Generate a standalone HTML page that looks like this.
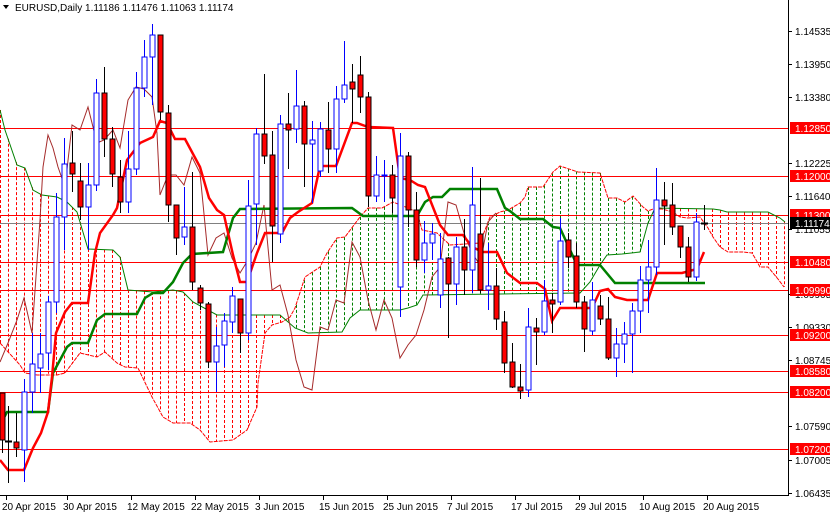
<!DOCTYPE html>
<html><head><meta charset="utf-8"><style>
html,body{margin:0;padding:0;background:#fff;width:830px;height:514px;overflow:hidden}
svg{display:block}
text{font-family:"Liberation Sans",Arial,sans-serif;font-size:10px}
</style></head><body>
<svg id="s" width="830" height="514" xmlns="http://www.w3.org/2000/svg"></svg>
<script>
const S=document.getElementById('s');let h='';
function L(p){return p.map(q=>q.join(',')).join(' ')}
function interp(a,x){if(x<=a[0][0])return a[0][1];for(let i=1;i<a.length;i++){if(x<=a[i][0]){const t=(x-a[i-1][0])/(a[i][0]-a[i-1][0]);return a[i-1][1]+t*(a[i][1]-a[i-1][1]);}}return a[a.length-1][1];}
const A=[[0,343],[20,365],[25,373],[37,375],[57,375],[65,373],[80,353],[97,357],[105,352],[117,363],[125,367],[138,368],[152,397],[163,417],[173,423],[190,423],[200,430],[210,442],[233,440],[247,430],[257,407],[258,383],[265,333],[272,325],[282,322],[290,317],[295,308],[305,277],[320,267],[327,253],[337,238],[345,237],[360,217],[368,208],[382,208],[393,202],[408,208],[417,212],[422,230],[437,233],[450,245],[480,243],[490,217],[500,212],[508,210],[520,203],[525,197],[528,187],[543,187],[553,172],[560,166],[578,172],[600,173],[608,198],[617,198],[625,202],[633,196],[643,207],[648,211],[653,209],[662,209],[673,212],[680,217],[688,218],[700,217],[708,228],[713,237],[720,247],[728,252],[743,252],[752,253],[755,258],[760,267],[768,267],[778,279],[784,287]];
const B=[[0,110],[5,130],[17,165],[25,168],[33,190],[42,195],[57,197],[67,202],[77,212],[88,249],[113,250],[120,257],[128,290],[153,292],[173,290],[183,292],[193,302],[217,315],[280,315],[295,328],[308,333],[342,332],[350,318],[360,310],[400,310],[408,308],[417,305],[423,295],[580,293],[590,282],[600,265],[607,255],[622,254],[640,252],[648,223],[655,208],[713,209],[720,210],[727,212],[768,212],[780,218],[785,222]];
const T=[[0,460],[8,470],[24,470],[33,448],[41,433],[48,412],[52,377],[56,333],[65,312],[72,303],[88,303],[95,253],[100,233],[113,215],[117,208],[127,160],[140,143],[153,137],[160,121],[167,123],[175,139],[185,139],[200,167],[209,198],[217,210],[224,215],[233,255],[240,282],[247,282],[257,253],[265,233],[282,233],[290,218],[298,212],[312,203],[320,166],[336,166],[352,123],[357,123],[368,127],[393,128],[400,178],[410,180],[418,185],[425,187],[440,225],[448,235],[463,235],[472,247],[483,252],[497,252],[507,273],[520,283],[537,283],[545,289],[552,321],[560,308],[592,308],[600,291],[608,289],[615,297],[627,300],[648,300],[657,273],[682,273],[697,269],[704,252]];
const K=[[0,425],[7,412],[48,412],[53,373],[67,347],[72,343],[88,343],[97,320],[105,314],[137,314],[145,298],[153,293],[163,293],[173,282],[183,263],[192,254],[223,252],[233,218],[240,209],[352,208],[363,216],[417,216],[425,202],[433,197],[442,197],[450,189],[497,189],[505,208],[510,211],[520,219],[543,219],[553,227],[560,228],[577,265],[600,265],[615,283],[705,283]];
const H=[[0,362],[8,343],[17,320],[24,298],[32,333],[40,220],[43,167],[48,135],[53,148],[58,167],[65,187],[72,125],[80,130],[88,107],[97,143],[104,140],[113,130],[120,148],[128,100],[136,87],[144,89],[152,97],[157,133],[160,195],[168,175],[176,175],[184,185],[192,157],[200,173],[208,255],[216,238],[224,233],[232,258],[240,273],[248,260],[256,243],[264,205],[272,290],[280,285],[288,315],[296,360],[304,387],[312,390],[320,327],[328,330],[336,300],[344,303],[352,242],[360,257],[368,300],[376,330],[384,300],[392,318],[400,358],[408,345],[416,335],[424,310],[432,277],[440,267],[448,202],[456,205],[464,233],[472,253],[480,265],[488,222],[496,213]];
const C=[[2,393,440,393,453,'r'],[8,441,441,406,483,'d'],[16,442,448,413,457,'r'],[24,392,450,379,482,'b'],[32,364,392,333,413,'b'],[40,354,368,333,393,'b'],[48,302,353,296,370,'b'],[56,217,302,193,313,'b'],[64,164,217,138,250,'b'],[72,163,174,131,192,'r'],[80,181,207,163,220,'r'],[88,185,207,163,250,'b'],[96,93,185,79,191,'b'],[104,93,139,67,157,'r'],[112,139,174,127,187,'r'],[120,177,202,160,213,'r'],[128,169,202,131,213,'b'],[136,88,169,72,175,'b'],[144,57,88,40,97,'b'],[152,35,57,24,105,'b'],[160,35,112,35,120,'r'],[168,113,205,105,222,'r'],[176,205,238,205,255,'r'],[184,227,237,187,245,'b'],[192,227,282,172,290,'r'],[200,288,303,285,310,'r'],[208,304,362,302,368,'r'],[216,346,362,327,392,'b'],[224,321,345,313,367,'b'],[232,296,322,287,333,'b'],[240,299,333,299,353,'r'],[248,206,333,180,340,'b'],[256,134,204,128,245,'b'],[264,134,156,74,164,'r'],[272,155,226,131,262,'r'],[280,124,234,115,243,'b'],[288,124,130,93,169,'r'],[296,106,129,70,143,'b'],[304,106,144,101,187,'r'],[312,140,144,121,203,'b'],[320,129,171,122,177,'b'],[328,130,149,102,173,'r'],[336,99,149,86,173,'b'],[344,85,99,41,103,'b'],[352,82,89,64,123,'r'],[360,75,97,56,113,'r'],[368,97,196,92,207,'r'],[376,175,196,156,202,'b'],[384,175,176,160,202,'b'],[392,175,198,165,213,'r'],[400,156,287,133,317,'b'],[408,156,210,152,227,'r'],[416,210,260,192,267,'r'],[424,243,260,221,273,'b'],[432,234,243,223,260,'b'],[440,259,295,233,308,'b'],[448,258,284,257,338,'r'],[456,247,284,237,305,'b'],[464,247,270,219,295,'r'],[472,205,270,167,293,'b'],[480,234,290,178,293,'r'],[488,286,290,243,310,'b'],[496,286,319,268,330,'r'],[504,322,363,311,373,'r'],[512,362,387,343,388,'r'],[520,387,391,364,399,'r'],[528,327,390,308,397,'b'],[536,328,332,318,365,'r'],[544,301,332,280,335,'b'],[552,300,304,293,333,'r'],[560,241,302,218,305,'b'],[568,240,257,233,268,'r'],[576,256,302,243,308,'r'],[584,302,329,296,352,'r'],[592,300,331,282,335,'b'],[600,306,319,295,325,'r'],[608,319,358,297,360,'r'],[616,344,358,328,377,'b'],[624,334,344,322,363,'b'],[632,311,334,303,373,'b'],[640,280,311,266,333,'b'],[648,267,280,240,313,'b'],[656,200,267,168,275,'b'],[664,200,206,182,245,'r'],[672,205,227,183,235,'r'],[680,226,247,226,258,'r'],[688,247,277,237,282,'r'],[696,222,277,213,281,'b'],[704,223,223,205,230,'d']];
// hatch
for(let x=0;x<=785;x+=8){const a=interp(A,x),b=interp(B,x);const c=a<b?'#008000':'#ff0000';h+=`<line x1="${x+.5}" x2="${x+.5}" y1="${Math.min(a,b)}" y2="${Math.max(a,b)}" stroke="${c}" stroke-width="1" stroke-dasharray="3,2"/>`;}
// horizontal levels
[128,176,215,262,290,335,371,392,449].forEach(y=>{h+=`<line x1="0" x2="788" y1="${y+.5}" y2="${y+.5}" stroke="#ff0000" stroke-width="1"/>`;});
h+=`<line x1="0" x2="788" y1="223.5" y2="223.5" stroke="#808080" stroke-width="1"/>`;
h+=`<polyline points="${L(A)}" fill="none" stroke="#ff0000" stroke-width="1" stroke-dasharray="4,1"/>`;
h+=`<polyline points="${L(B)}" fill="none" stroke="#008000" stroke-width="1"/>`;
h+=`<polyline points="${L(H)}" fill="none" stroke="#a52a2a" stroke-width="1"/>`;
h+=`<polyline points="${L(K)}" fill="none" stroke="#008000" stroke-width="2.5"/>`;
h+=`<polyline points="${L(T)}" fill="none" stroke="#ff0000" stroke-width="2.5"/>`;
C.forEach(c=>{const [x,t,b,hi,lo,k]=c;const X=x+.5;
 if(k=='b'){h+=`<line x1="${X}" x2="${X}" y1="${hi}" y2="${lo}" stroke="#0000ff"/><rect x="${x-2}" y="${t}" width="5" height="${Math.max(b-t,1)}" fill="#fff" stroke="#0000ff"/>`;}
 else if(k=='r'){h+=`<line x1="${X}" x2="${X}" y1="${hi}" y2="${lo}" stroke="#000"/><rect x="${x-2}" y="${t}" width="5" height="${Math.max(b-t,1)}" fill="#ff0000" stroke="#000"/>`;}
 else {h+=`<line x1="${X}" x2="${X}" y1="${hi}" y2="${lo}" stroke="#000"/><line x1="${x-3}" x2="${x+4}" y1="${t+.5}" y2="${t+.5}" stroke="#000" stroke-width="2"/>`;}
});
// axes
h+=`<rect x="789" y="0" width="41" height="514" fill="#fff"/><rect x="0" y="496" width="830" height="18" fill="#fff"/>`;
h+=`<line x1="788.5" x2="788.5" y1="0" y2="496" stroke="#000"/><line x1="0" x2="789" y1="495.5" y2="495.5" stroke="#000"/>`;
const P=[[31,'1.14535'],[64,'1.13950'],[97,'1.13380'],[163,'1.12225'],[196,'1.11640'],[229,'1.11055'],[294,'1.09905'],[327,'1.09330'],[360,'1.08745'],[426,'1.07590'],[460,'1.07005'],[493,'1.06435']];
P.forEach(p=>{h+=`<line x1="789" x2="792" y1="${p[0]+.5}" y2="${p[0]+.5}" stroke="#000"/><text x="795" y="${p[0]+4}" fill="#000">${p[1]}</text>`;});
[[128,'1.12850'],[176,'1.12000'],[215,'1.11300'],[262,'1.10480'],[290,'1.09990'],[335,'1.09200'],[371,'1.08580'],[392,'1.08200'],[449,'1.07200']].forEach(p=>{h+=`<rect x="790" y="${p[0]-6}" width="40" height="12" fill="#ff0000"/><text x="795" y="${p[0]+4}" fill="#fff">${p[1]}</text>`;});
h+=`<rect x="790" y="217" width="40" height="12" fill="#000"/><text x="795" y="227" fill="#fff">1.11174</text>`;
const D=[[2,'20 Apr 2015'],[63,'30 Apr 2015'],[127,'12 May 2015'],[191,'22 May 2015'],[255,'3 Jun 2015'],[319,'15 Jun 2015'],[383,'25 Jun 2015'],[447,'7 Jul 2015'],[511,'17 Jul 2015'],[575,'29 Jul 2015'],[639,'10 Aug 2015'],[703,'20 Aug 2015']];
D.forEach(d=>{h+=`<line x1="${d[0]+4.5}" x2="${d[0]+4.5}" y1="496" y2="500" stroke="#000"/><text x="${d[0]}" y="510" fill="#000">${d[1]}</text>`;});
h+=`<polygon points="3,5 9,5 6,9" fill="#000"/><text x="15" y="11" fill="#000">EURUSD,Daily  1.11186 1.11476 1.11063 1.11174</text>`;
S.innerHTML=h;
</script>
</body></html>
